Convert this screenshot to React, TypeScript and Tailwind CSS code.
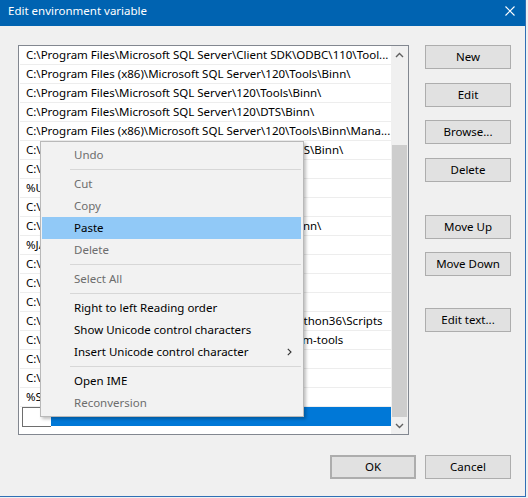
const FONT = { fontFamily: '"Segoe UI", "Noto Sans", "Open Sans", sans-serif' };

const paths = [
  "C:\\Program Files\\Microsoft SQL Server\\Client SDK\\ODBC\\110\\Tool...",
  "C:\\Program Files (x86)\\Microsoft SQL Server\\120\\Tools\\Binn\\",
  "C:\\Program Files\\Microsoft SQL Server\\120\\Tools\\Binn\\",
  "C:\\Program Files\\Microsoft SQL Server\\120\\DTS\\Binn\\",
  "C:\\Program Files (x86)\\Microsoft SQL Server\\120\\Tools\\Binn\\Mana...",
  "C:\\Program Files (x86)\\Microsoft SQL Server\\120\\DTS\\Binn\\",
  "C:\\Program Files\\Git\\cmd",
  "%USERPROFILE%\\.dotnet\\tools",
  "C:\\WINDOWS\\system32",
  "C:\\Program Files\\Microsoft SQL Server\\130\\Tools\\Binn\\",
  "%JAVA_HOME%\\bin",
  "C:\\Program Files\\dotnet\\",
  "C:\\ProgramData\\chocolatey\\bin",
  "C:\\WINDOWS\\System32\\OpenSSH\\",
  "C:\\Users\\Anna\\AppData\\Local\\Programs\\Python\\Python36\\Scripts",
  "C:\\Users\\Adam\\AppData\\Local\\Android\\Sdk\\platform-tools",
  "C:\\Program Files\\Microsoft VS Code\\bin",
  "C:\\Program Files\\Git\\usr\\bin",
  "%SystemRoot%\\System32\\Wbem",
];

type MenuEntry = { label: string; disabled?: boolean; active?: boolean; sub?: boolean } | "sep";

const menu: MenuEntry[] = [
  { label: "Undo", disabled: true },
  "sep",
  { label: "Cut", disabled: true },
  { label: "Copy", disabled: true },
  { label: "Paste", active: true },
  { label: "Delete", disabled: true },
  "sep",
  { label: "Select All", disabled: true },
  "sep",
  { label: "Right to left Reading order" },
  { label: "Show Unicode control characters" },
  { label: "Insert Unicode control character", sub: true },
  "sep",
  { label: "Open IME" },
  { label: "Reconversion", disabled: true },
];

function Btn({ label, className = "" }: { label: string; className?: string }) {
  return (
    <div
      className={`flex h-[24px] w-[86px] items-center justify-center border border-[#adadad] bg-[#e1e1e1] text-[11.5px] text-black ${className}`}
    >
      {label}
    </div>
  );
}

function Chevron({ up }: { up?: boolean }) {
  return (
    <svg width="9" height="6" viewBox="0 0 9 6">
      <path
        d={up ? "M1 5 L4.5 1.5 L8 5" : "M1 1 L4.5 4.5 L8 1"}
        fill="none"
        stroke="#606060"
        strokeWidth="1.4"
      />
    </svg>
  );
}

export default function App() {
  return (
    <div className="relative h-[498px] w-[528px] overflow-hidden bg-[#f0f0f0]" style={FONT}>
      <div className="flex h-[497px] w-[526px] flex-col border-r border-b border-[#2f6fb5]">
        <div className="flex h-[26px] shrink-0 items-center justify-between bg-[#0063b1] pb-[4px] pl-2 pr-[10px] text-white">
          <span className="text-[11.5px] leading-none">Edit environment variable</span>
          <svg width="10" height="10" viewBox="0 0 10 10">
            <path d="M0.5 0.5 L9.5 9.5 M9.5 0.5 L0.5 9.5" stroke="#fff" strokeWidth="1.1" />
          </svg>
        </div>

        <div className="relative flex-1 bg-[#f0f0f0] pl-[18px] pt-[19px]">
          <div className="flex">
            <div className="flex h-[390px] w-[391px] shrink-0 overflow-hidden border border-[#828790] bg-white">
              <div className="min-w-0 flex-1 overflow-hidden pl-[1px]">
                {paths.map((p, i) => (
                  <div
                    key={i}
                    className="h-[19px] overflow-hidden whitespace-nowrap border-b border-[#ededed] pl-[6px] text-[11.5px] leading-[18px] text-black"
                  >
                    {p}
                  </div>
                ))}
                <div className="flex h-[19px]">
                  <div className="ml-[2px] h-[20px] w-[29px] border border-r-0 border-[#6e6e6e] bg-white" />
                  <div className="flex-1 bg-[#0078d7]" />
                </div>
              </div>
              <div className="flex w-[17px] shrink-0 flex-col bg-[#f0f0f0]">
                <div className="flex h-[17px] items-center justify-center">
                  <Chevron up />
                </div>
                <div className="flex flex-1 flex-col">
                  <div className="h-[82px]" />
                  <div className="mx-[1px] flex-1 bg-[#cdcdcd]" />
                </div>
                <div className="flex h-[17px] items-center justify-center">
                  <Chevron />
                </div>
              </div>
            </div>

            <div className="ml-[16px] flex flex-col">
              <Btn label="New" />
              <Btn label="Edit" className="mt-[14px]" />
              <Btn label="Browse..." className="mt-[13px]" />
              <Btn label="Delete" className="mt-[14px]" />
              <Btn label="Move Up" className="mt-[33px]" />
              <Btn label="Move Down" className="mt-[13px]" />
              <Btn label="Edit text..." className="mt-[32px]" />
            </div>
          </div>

          <div className="mt-[20px] flex justify-end gap-[9px] pr-[14px]">
            <Btn label="OK" className="border-2 border-[#0078d7]" />
            <Btn label="Cancel" />
          </div>

          <div className="absolute left-[40px] top-[115px] w-[264px] border border-[#b9b9b9] bg-[#f2f2f2] pb-[2px] pl-[1px] pr-[2px] pt-[2px] text-[11.5px] shadow-[2px_2px_3px_rgba(0,0,0,0.25)]">
            {menu.map((m, i) =>
              m === "sep" ? (
                <div key={i} className="flex h-[7px] items-center pl-[28px]">
                  <div className="h-px flex-1 bg-[#d7d7d7]" />
                </div>
              ) : (
                <div
                  key={i}
                  className={`flex h-[22px] items-center justify-between pl-[32px] pr-[9px] ${
                    m.active ? "bg-[#91c9f7]" : ""
                  } ${m.disabled ? "text-[#6d6d6d]" : "text-black"}`}
                >
                  <span>{m.label}</span>
                  {m.sub && (
                    <svg width="5" height="8" viewBox="0 0 5 8">
                      <path d="M0.8 0.8 L4 4 L0.8 7.2" fill="none" stroke="#333" strokeWidth="1.1" />
                    </svg>
                  )}
                </div>
              )
            )}
          </div>
        </div>
      </div>
    </div>
  );
}
